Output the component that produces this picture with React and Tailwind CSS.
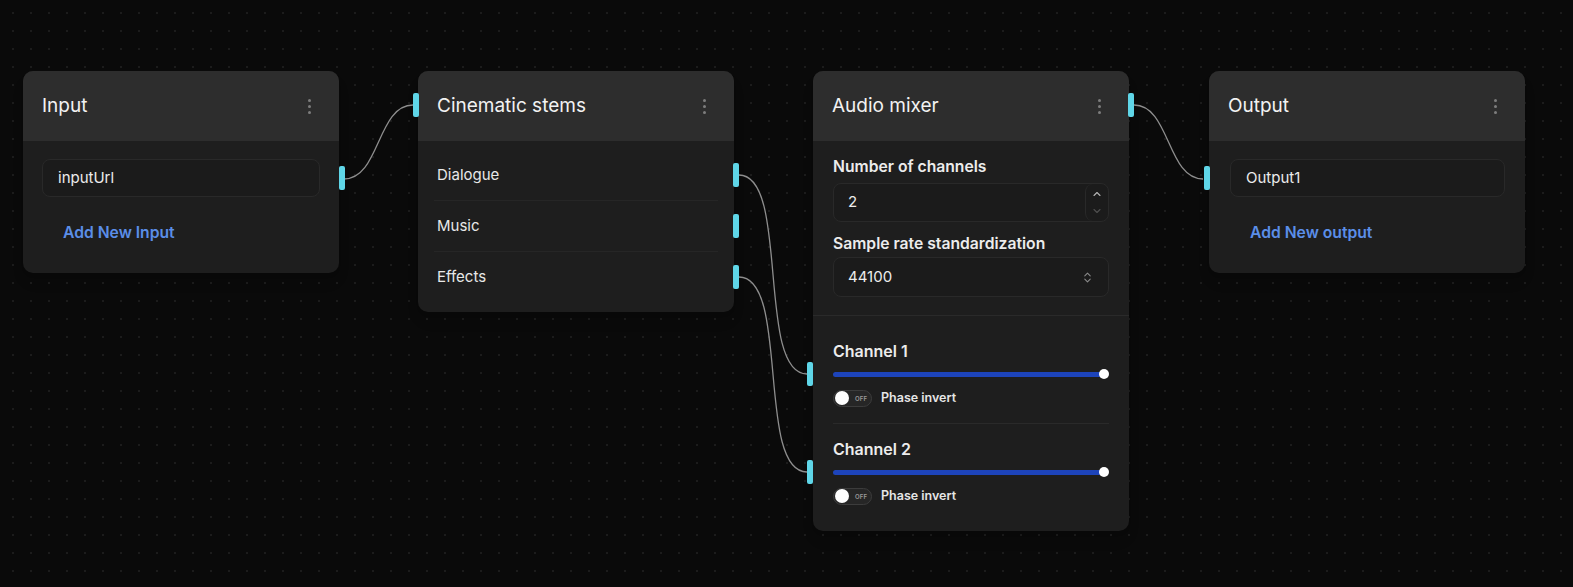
import { ChevronUp, ChevronDown, ChevronsUpDown } from 'lucide-react'

const font = { fontFamily: 'Inter, "Liberation Sans", sans-serif' }

function Handle({ className }) {
  return <div className={`absolute w-[6px] h-[24px] rounded-[2px] bg-[#5fd6e8] ${className}`} />
}

function Kebab() {
  return (
    <div className="w-[22px] flex flex-col items-center gap-[3px]">
      <span className="w-[3px] h-[3px] rounded-full bg-[#7d7d7d]" />
      <span className="w-[3px] h-[3px] rounded-full bg-[#7d7d7d]" />
      <span className="w-[3px] h-[3px] rounded-full bg-[#7d7d7d]" />
    </div>
  )
}

function Node({ title, x, children, headerHandle }) {
  return (
    <div className={`absolute top-[71px] w-[316px] rounded-[10px] bg-[#1e1e1e] shadow-lg ${x}`}>
      <div className="relative h-[70px] rounded-t-[10px] bg-[#2d2d2d] pl-[19px] pr-[19px] flex items-center justify-between">
        <span className="text-[19px] text-[#f2f2f2]">{title}</span>
        <Kebab />
        {headerHandle}
      </div>
      {children}
    </div>
  )
}

function Field({ value, handle }) {
  return (
    <div className="relative h-[38px] rounded-lg border border-[#292929] bg-[#1b1b1b] px-[15px] flex items-center text-[15px] text-[#ececec]">
      {value}
      {handle}
    </div>
  )
}

function Toggle() {
  return (
    <div className="w-[39px] h-[17px] rounded-full bg-[#262626] border border-[#3c3c3c] flex items-center pl-[1px] gap-[6px]">
      <span className="w-[14px] h-[14px] rounded-full bg-white" />
      <span className="text-[6px] font-semibold text-[#9a9a9a] tracking-wide">OFF</span>
    </div>
  )
}

function Channel({ name, className }) {
  return (
    <div className={className}>
      <div className="h-[22px] flex items-center text-[16px] font-semibold text-[#ececec]">{name}</div>
      <div className="relative mt-[5px] h-[14px] flex items-center">
        <Handle className="left-[-26px] top-[-5px]" />
        <div className="flex-1 h-[5px] rounded-full bg-[#1d44bb]" />
        <span className="w-[10px] h-[10px] rounded-full bg-white -ml-[4px]" />
      </div>
      <div className="mt-[8px] h-[18px] flex items-center gap-[9px]">
        <Toggle />
        <span className="text-[12.5px] font-semibold text-[#e6e6e6]">Phase invert</span>
      </div>
    </div>
  )
}

const edges = [
  'M344,179 C380,179 377,105 413,105',
  'M739,175 C790,175 756,374 807,374',
  'M739,277 C790,277 756,472 807,472',
  'M1134,105 C1170,105 1167,179 1203,179',
]

export default function App() {
  return (
    <div
      className="relative w-full h-screen overflow-hidden bg-[#0a0a0a] bg-[radial-gradient(circle,#1c1c1c_1px,transparent_1.2px)] bg-[size:18px_18px] bg-[position:4px_4px]"
      style={font}
    >
      <svg className="absolute inset-0 w-full h-full pointer-events-none" fill="none">
        {edges.map((d) => (
          <path key={d} d={d} stroke="#8e8e8e" strokeWidth="1.3" />
        ))}
      </svg>

      <Node title="Input" x="left-[23px]">
        <div className="px-[19px] pt-[18px] pb-[20px]">
          <Field value="inputUrl" handle={<Handle className="right-[-26px] top-[6px]" />} />
          <div className="mt-[16px] px-[21px] py-[10px] text-[15.7px] leading-[20px] font-semibold text-[#5b8ee8]">Add New Input</div>
        </div>
      </Node>

      <Node title="Cinematic stems" x="left-[418px]" headerHandle={<Handle className="left-[-5px] top-[22px]" />}>
        <div className="pt-[9px] pb-[9px]">
          {['Dialogue', 'Music', 'Effects'].map((s, i) => (
            <div key={s} className={`relative mx-[16px] pl-[3px] h-[51px] flex items-center text-[15px] text-[#e8e8e8] ${i < 2 ? 'border-b border-[#262626]' : ''}`}>
              {s}
              <Handle className="right-[-21px] top-[13px]" />
            </div>
          ))}
        </div>
      </Node>

      <Node title="Audio mixer" x="left-[813px]" headerHandle={<Handle className="right-[-5px] top-[22px]" />}>
        <div className="px-[20px] pt-[16px] pb-[18px] border-b border-[#2a2a2a]">
          <div className="h-[20px] flex items-center text-[15.7px] font-semibold text-[#ececec]">Number of channels</div>
          <div className="mt-[6px] h-[39px] rounded-lg border border-[#292929] bg-[#1b1b1b] flex">
            <div className="flex-1 pl-[14px] flex items-center text-[15px] text-[#ececec]">2</div>
            <div className="w-[23px] rounded-lg border-l border-[#292929] flex flex-col items-center justify-center gap-[5px]">
              <ChevronUp size={12} strokeWidth={2.2} className="text-[#b5b5b5]" />
              <ChevronDown size={12} strokeWidth={2.2} className="text-[#4f4f4f]" />
            </div>
          </div>
          <div className="mt-[12px] h-[20px] flex items-center text-[15.7px] font-semibold text-[#ececec]">Sample rate standardization</div>
          <div className="mt-[3px] h-[40px] rounded-lg border border-[#292929] bg-[#1b1b1b] pl-[14px] pr-[14px] flex items-center justify-between text-[15px] text-[#ececec]">
            44100
            <ChevronsUpDown size={13} strokeWidth={2} className="text-[#8a8a8a]" />
          </div>
        </div>
        <div className="px-[20px] pt-[24px] pb-[26px]">
          <Channel name="Channel 1" className="pb-[16px] border-b border-[#2a2a2a]" />
          <Channel name="Channel 2" className="pt-[14px]" />
        </div>
      </Node>

      <Node title="Output" x="left-[1209px]">
        <div className="pl-[21px] pr-[20px] pt-[18px] pb-[20px]">
          <Field value="Output1" handle={<Handle className="left-[-27px] top-[6px]" />} />
          <div className="mt-[16px] px-[20px] py-[10px] text-[15.7px] leading-[20px] font-semibold text-[#5b8ee8]">Add New output</div>
        </div>
      </Node>
    </div>
  )
}
